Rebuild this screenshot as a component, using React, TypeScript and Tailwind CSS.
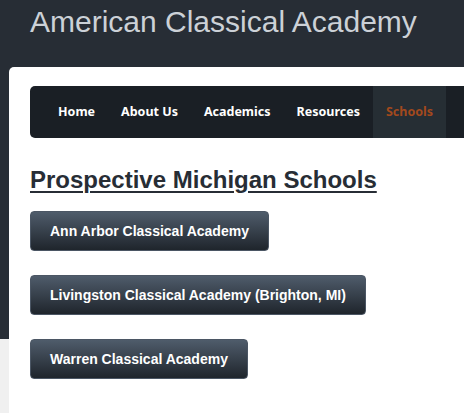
import React from 'react'

const navItems = ['Home', 'About Us', 'Academics', 'Resources', 'Schools']

const schools = [
    'Ann Arbor Classical Academy',
    'Livingston Classical Academy (Brighton, MI)',
    'Warren Classical Academy',
]

const App = () => {
    return (
        <div className="min-h-[413px] w-full overflow-hidden bg-[linear-gradient(#272d35_339px,#f0f0f0_339px)] font-['Liberation_Sans',Arial,sans-serif]">
            <h1 className="pl-[30px] pt-[5px] text-[30px] leading-[34px] text-[#ccd1d7]">
                American Classical Academy
            </h1>

            <div className="ml-[9px] mt-[28px] min-h-[346px] rounded-tl-[5px] bg-white pl-[21px] pt-[19px]">
                <nav className="flex h-[52px] items-stretch rounded-l-[5px] bg-[#1a1f25] pl-[15px] font-['Noto_Sans',sans-serif] text-[12.5px] font-bold">
                    {navItems.map((item) => (
                        <a
                            key={item}
                            className={
                                item === 'Schools'
                                    ? 'flex items-center bg-[#262e34] px-[13px] text-[#a2491d]'
                                    : 'flex items-center px-[13px] text-white'
                            }
                        >
                            {item}
                        </a>
                    ))}
                </nav>

                <h2 className="mt-[28px] text-[24px] font-bold leading-[28px] text-[#272d35] underline decoration-2 underline-offset-[3px]">
                    Prospective Michigan Schools
                </h2>

                <div className="mt-[17px] flex flex-col items-start gap-[24px]">
                    {schools.map((school) => (
                        <button
                            key={school}
                            className="flex h-[40px] items-center rounded-[4px] border border-[#4b5664] bg-[linear-gradient(#4f5c6b,#1f252c)] px-[19px] text-[14px] font-bold leading-[16px] text-white"
                        >
                            {school}
                        </button>
                    ))}
                </div>
            </div>
        </div>
    )
}

export default App
